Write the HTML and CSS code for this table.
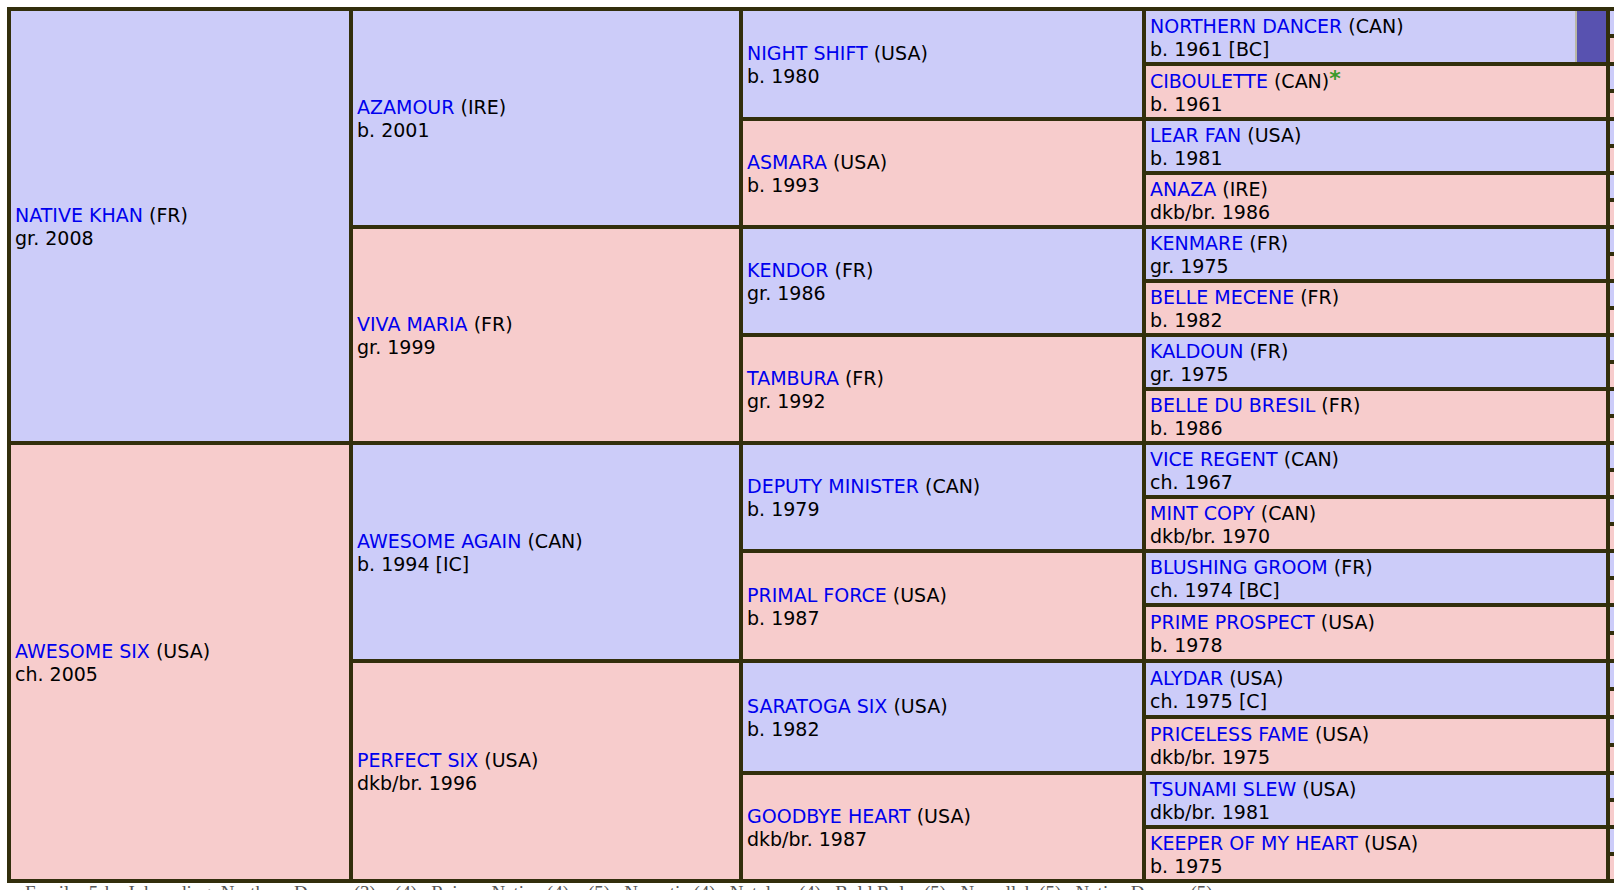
FILE: index.html
```html
<!DOCTYPE html>
<html lang="en">
<head>
<meta charset="utf-8">
<title>Pedigree</title>
<link rel="stylesheet" href="styles.css">
</head>
<body>
<div class="pedigree">
  <!-- generation 1 -->
  <div class="cell g1 sire"><div><a href="#">NATIVE KHAN</a> (FR)</div><div>gr. 2008</div></div>
  <div class="cell g1 dam"><div><a href="#">AWESOME SIX</a> (USA)</div><div>ch. 2005</div></div>

  <!-- generation 2 -->
  <div class="cell g2 sire"><div><a href="#">AZAMOUR</a> (IRE)</div><div>b. 2001</div></div>
  <div class="cell g2 dam"><div><a href="#">VIVA MARIA</a> (FR)</div><div>gr. 1999</div></div>
  <div class="cell g2 sire"><div><a href="#">AWESOME AGAIN</a> (CAN)</div><div>b. 1994 [IC]</div></div>
  <div class="cell g2 dam"><div><a href="#">PERFECT SIX</a> (USA)</div><div>dkb/br. 1996</div></div>

  <!-- generation 3 -->
  <div class="cell g3 sire"><div><a href="#">NIGHT SHIFT</a> (USA)</div><div>b. 1980</div></div>
  <div class="cell g3 dam"><div><a href="#">ASMARA</a> (USA)</div><div>b. 1993</div></div>
  <div class="cell g3 sire"><div><a href="#">KENDOR</a> (FR)</div><div>gr. 1986</div></div>
  <div class="cell g3 dam"><div><a href="#">TAMBURA</a> (FR)</div><div>gr. 1992</div></div>
  <div class="cell g3 sire"><div><a href="#">DEPUTY MINISTER</a> (CAN)</div><div>b. 1979</div></div>
  <div class="cell g3 dam"><div><a href="#">PRIMAL FORCE</a> (USA)</div><div>b. 1987</div></div>
  <div class="cell g3 sire"><div><a href="#">SARATOGA SIX</a> (USA)</div><div>b. 1982</div></div>
  <div class="cell g3 dam"><div><a href="#">GOODBYE HEART</a> (USA)</div><div>dkb/br. 1987</div></div>

  <!-- generation 4 -->
  <div class="g4 sire marked">
    <div class="cell inner"><div><a href="#">NORTHERN DANCER</a> (CAN)</div><div>b. 1961 [BC]</div></div>
    <div class="mark"></div>
  </div>
  <div class="cell g4 dam"><div><a href="#">CIBOULETTE</a> (CAN)<span class="star">*</span></div><div>b. 1961</div></div>
  <div class="cell g4 sire"><div><a href="#">LEAR FAN</a> (USA)</div><div>b. 1981</div></div>
  <div class="cell g4 dam"><div><a href="#">ANAZA</a> (IRE)</div><div>dkb/br. 1986</div></div>
  <div class="cell g4 sire"><div><a href="#">KENMARE</a> (FR)</div><div>gr. 1975</div></div>
  <div class="cell g4 dam"><div><a href="#">BELLE MECENE</a> (FR)</div><div>b. 1982</div></div>
  <div class="cell g4 sire"><div><a href="#">KALDOUN</a> (FR)</div><div>gr. 1975</div></div>
  <div class="cell g4 dam"><div><a href="#">BELLE DU BRESIL</a> (FR)</div><div>b. 1986</div></div>
  <div class="cell g4 sire"><div><a href="#">VICE REGENT</a> (CAN)</div><div>ch. 1967</div></div>
  <div class="cell g4 dam"><div><a href="#">MINT COPY</a> (CAN)</div><div>dkb/br. 1970</div></div>
  <div class="cell g4 sire"><div><a href="#">BLUSHING GROOM</a> (FR)</div><div>ch. 1974 [BC]</div></div>
  <div class="cell g4 dam"><div><a href="#">PRIME PROSPECT</a> (USA)</div><div>b. 1978</div></div>
  <div class="cell g4 sire"><div><a href="#">ALYDAR</a> (USA)</div><div>ch. 1975 [C]</div></div>
  <div class="cell g4 dam"><div><a href="#">PRICELESS FAME</a> (USA)</div><div>dkb/br. 1975</div></div>
  <div class="cell g4 sire"><div><a href="#">TSUNAMI SLEW</a> (USA)</div><div>dkb/br. 1981</div></div>
  <div class="cell g4 dam"><div><a href="#">KEEPER OF MY HEART</a> (USA)</div><div>b. 1975</div></div>

  <!-- generation 5: only a sliver shows at the window edge -->
  <div class="cell g5 sire"></div><div class="cell g5 dam"></div>
  <div class="cell g5 sire"></div><div class="cell g5 dam"></div>
  <div class="cell g5 sire"></div><div class="cell g5 dam"></div>
  <div class="cell g5 sire"></div><div class="cell g5 dam"></div>
  <div class="cell g5 sire"></div><div class="cell g5 dam"></div>
  <div class="cell g5 sire"></div><div class="cell g5 dam"></div>
  <div class="cell g5 sire"></div><div class="cell g5 dam"></div>
  <div class="cell g5 sire"></div><div class="cell g5 dam"></div>
  <div class="cell g5 sire"></div><div class="cell g5 dam"></div>
  <div class="cell g5 sire"></div><div class="cell g5 dam"></div>
  <div class="cell g5 sire"></div><div class="cell g5 dam"></div>
  <div class="cell g5 sire"></div><div class="cell g5 dam"></div>
  <div class="cell g5 sire"></div><div class="cell g5 dam"></div>
  <div class="cell g5 sire"></div><div class="cell g5 dam"></div>
  <div class="cell g5 sire"></div><div class="cell g5 dam"></div>
  <div class="cell g5 sire"></div><div class="cell g5 dam"></div>
</div>
<p class="notes">Family: 5-h &nbsp; Inbreeding: Northern Dancer (3) x (4) &nbsp; Raise a Native (4) x (5) &nbsp; Nearctic (4) &nbsp; Natalma (4) &nbsp; Bold Ruler (5) &nbsp; Nasrullah (5) &nbsp; Native Dancer (5)</p>
</body>
</html>
```

FILE: styles.css
```css
html {
  overflow: hidden;
}

body {
  margin: 7px 0 0 7px;
  font-family: "DejaVu Sans", Verdana, sans-serif;
  font-size: 19px;
  line-height: 23px;
  color: #000;
  background: #fff;
}

a {
  color: #0000ee;
  text-decoration: none;
}

.pedigree {
  display: grid;
  width: max-content;
  grid-template-columns: 338px 386px 399px 460px 320px;
  grid-template-rows:
    23px 24px 23px 24px 23px 23px 23px 23px
    23px 23px 23px 23px 23px 23px 23px 23px
    23px 23px 23px 23px 23px 23px 24px 24px
    24px 24px 24px 24px 23px 23px 23px 23px;
  grid-auto-flow: column;
  gap: 4px;
  padding: 4px;
  background: #322e0c;
}

.cell {
  display: flex;
  flex-direction: column;
  justify-content: center;
  padding: 2px 4px 0;
  white-space: nowrap;
  overflow: hidden;
}

.g1 { grid-row: span 16; }
.g2 { grid-row: span 8; }
.g3 { grid-row: span 4; }
.g4 { grid-row: span 2; }
.g5 { grid-row: span 1; }

.sire { background: #ccccf9; }
.dam { background: #f7cccc; }

.marked {
  display: flex;
}

.marked .inner {
  flex: 1;
}

.mark {
  width: 29px;
  border-left: 2px solid #b9b7a6;
  background: #5852b0;
}

.star {
  color: #3a9a2a;
  font-weight: bold;
  font-size: 22px;
  line-height: 0;
  position: relative;
  top: -2px;
}

.notes {
  margin: 0 0 0 18px;
  font-family: "Liberation Serif", "Times New Roman", serif;
  font-size: 19px;
  line-height: 20px;
  color: #555;
  white-space: nowrap;
}
```
